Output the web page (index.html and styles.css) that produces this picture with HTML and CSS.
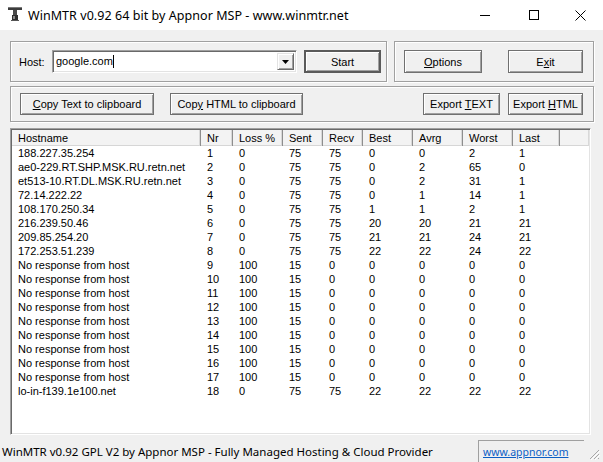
FILE: index.html
```html
<!DOCTYPE html>
<html>
<head>
<meta charset="utf-8">
<link rel="stylesheet" href="styles.css">
</head>
<body>
<div class="window">
  <div class="titlebar">
    <svg class="app-icon" width="16" height="16" viewBox="0 0 16 16">
      <rect x="1" y="1" width="14" height="3" fill="#3c3c3c"/>
      <rect x="1" y="1" width="14" height="1" fill="#7a7a7a"/>
      <rect x="6" y="4" width="4" height="6" fill="#4a4a4a"/>
      <rect x="5" y="9" width="6" height="5" fill="#2e2e2e"/>
      <rect x="6" y="10" width="2" height="3" fill="#8a8a8a"/>
      <rect x="4" y="14" width="8" height="1" fill="#555"/>
    </svg>
    <span class="title">WinMTR v0.92 64 bit by Appnor MSP - www.winmtr.net</span>
    <div class="controls">
      <span class="ctl"><svg width="10" height="10" viewBox="0 0 10 10"><rect x="0" y="5" width="10" height="1" fill="#000"/></svg></span>
      <span class="ctl"><svg width="10" height="10" viewBox="0 0 10 10"><rect x="0.5" y="0.5" width="9" height="9" fill="none" stroke="#000"/></svg></span>
      <span class="ctl"><svg width="11" height="11" viewBox="0 0 11 11"><path d="M0.5 0.5 L10.5 10.5 M10.5 0.5 L0.5 10.5" stroke="#000" stroke-width="1"/></svg></span>
    </div>
  </div>
  <div class="client">
    <div class="row1">
      <div class="group g-host">
        <span class="label">Host:</span>
        <div class="combo">
          <span class="combo-text">google.com<span class="caret"></span></span>
          <span class="combo-btn"><svg width="7" height="4" viewBox="0 0 7 4"><path d="M0 0 H7 L3.5 4 Z" fill="#000"/></svg></span>
        </div>
        <button class="btn btn-default btn-start">Start</button>
      </div>
      <div class="group g-opts">
        <button class="btn btn-options"><u>O</u>ptions</button>
        <button class="btn btn-exit">E<u>x</u>it</button>
      </div>
    </div>
    <div class="group row2">
      <button class="btn btn-copytext"><u>C</u>opy Text to clipboard</button>
      <button class="btn btn-copyhtml">Cop<u>y</u> HTML to clipboard</button>
      <span class="spacer"></span>
      <button class="btn btn-exptext">Export <u>T</u>EXT</button>
      <button class="btn btn-exphtml">Export <u>H</u>TML</button>
    </div>
    <div class="list">
      <div class="list-head">
        <span class="hc c-host">Hostname</span>
        <span class="hc c-nr">Nr</span>
        <span class="hc c-loss">Loss %</span>
        <span class="hc c-sent">Sent</span>
        <span class="hc c-recv">Recv</span>
        <span class="hc c-best">Best</span>
        <span class="hc c-avrg">Avrg</span>
        <span class="hc c-worst">Worst</span>
        <span class="hc c-last">Last</span>
        <span class="hc c-rest"></span>
      </div>
      <div class="list-body">
        <div class="row"><span class="c-host">188.227.35.254</span><span class="c-nr">1</span><span class="c-loss">0</span><span class="c-sent">75</span><span class="c-recv">75</span><span class="c-best">0</span><span class="c-avrg">0</span><span class="c-worst">2</span><span class="c-last">1</span></div>
        <div class="row"><span class="c-host">ae0-229.RT.SHP.MSK.RU.retn.net</span><span class="c-nr">2</span><span class="c-loss">0</span><span class="c-sent">75</span><span class="c-recv">75</span><span class="c-best">0</span><span class="c-avrg">2</span><span class="c-worst">65</span><span class="c-last">0</span></div>
        <div class="row"><span class="c-host">et513-10.RT.DL.MSK.RU.retn.net</span><span class="c-nr">3</span><span class="c-loss">0</span><span class="c-sent">75</span><span class="c-recv">75</span><span class="c-best">0</span><span class="c-avrg">2</span><span class="c-worst">31</span><span class="c-last">1</span></div>
        <div class="row"><span class="c-host">72.14.222.22</span><span class="c-nr">4</span><span class="c-loss">0</span><span class="c-sent">75</span><span class="c-recv">75</span><span class="c-best">0</span><span class="c-avrg">1</span><span class="c-worst">14</span><span class="c-last">1</span></div>
        <div class="row"><span class="c-host">108.170.250.34</span><span class="c-nr">5</span><span class="c-loss">0</span><span class="c-sent">75</span><span class="c-recv">75</span><span class="c-best">1</span><span class="c-avrg">1</span><span class="c-worst">2</span><span class="c-last">1</span></div>
        <div class="row"><span class="c-host">216.239.50.46</span><span class="c-nr">6</span><span class="c-loss">0</span><span class="c-sent">75</span><span class="c-recv">75</span><span class="c-best">20</span><span class="c-avrg">20</span><span class="c-worst">21</span><span class="c-last">21</span></div>
        <div class="row"><span class="c-host">209.85.254.20</span><span class="c-nr">7</span><span class="c-loss">0</span><span class="c-sent">75</span><span class="c-recv">75</span><span class="c-best">21</span><span class="c-avrg">21</span><span class="c-worst">24</span><span class="c-last">21</span></div>
        <div class="row"><span class="c-host">172.253.51.239</span><span class="c-nr">8</span><span class="c-loss">0</span><span class="c-sent">75</span><span class="c-recv">75</span><span class="c-best">22</span><span class="c-avrg">22</span><span class="c-worst">24</span><span class="c-last">22</span></div>
        <div class="row"><span class="c-host">No response from host</span><span class="c-nr">9</span><span class="c-loss">100</span><span class="c-sent">15</span><span class="c-recv">0</span><span class="c-best">0</span><span class="c-avrg">0</span><span class="c-worst">0</span><span class="c-last">0</span></div>
        <div class="row"><span class="c-host">No response from host</span><span class="c-nr">10</span><span class="c-loss">100</span><span class="c-sent">15</span><span class="c-recv">0</span><span class="c-best">0</span><span class="c-avrg">0</span><span class="c-worst">0</span><span class="c-last">0</span></div>
        <div class="row"><span class="c-host">No response from host</span><span class="c-nr">11</span><span class="c-loss">100</span><span class="c-sent">15</span><span class="c-recv">0</span><span class="c-best">0</span><span class="c-avrg">0</span><span class="c-worst">0</span><span class="c-last">0</span></div>
        <div class="row"><span class="c-host">No response from host</span><span class="c-nr">12</span><span class="c-loss">100</span><span class="c-sent">15</span><span class="c-recv">0</span><span class="c-best">0</span><span class="c-avrg">0</span><span class="c-worst">0</span><span class="c-last">0</span></div>
        <div class="row"><span class="c-host">No response from host</span><span class="c-nr">13</span><span class="c-loss">100</span><span class="c-sent">15</span><span class="c-recv">0</span><span class="c-best">0</span><span class="c-avrg">0</span><span class="c-worst">0</span><span class="c-last">0</span></div>
        <div class="row"><span class="c-host">No response from host</span><span class="c-nr">14</span><span class="c-loss">100</span><span class="c-sent">15</span><span class="c-recv">0</span><span class="c-best">0</span><span class="c-avrg">0</span><span class="c-worst">0</span><span class="c-last">0</span></div>
        <div class="row"><span class="c-host">No response from host</span><span class="c-nr">15</span><span class="c-loss">100</span><span class="c-sent">15</span><span class="c-recv">0</span><span class="c-best">0</span><span class="c-avrg">0</span><span class="c-worst">0</span><span class="c-last">0</span></div>
        <div class="row"><span class="c-host">No response from host</span><span class="c-nr">16</span><span class="c-loss">100</span><span class="c-sent">15</span><span class="c-recv">0</span><span class="c-best">0</span><span class="c-avrg">0</span><span class="c-worst">0</span><span class="c-last">0</span></div>
        <div class="row"><span class="c-host">No response from host</span><span class="c-nr">17</span><span class="c-loss">100</span><span class="c-sent">15</span><span class="c-recv">0</span><span class="c-best">0</span><span class="c-avrg">0</span><span class="c-worst">0</span><span class="c-last">0</span></div>
        <div class="row"><span class="c-host">lo-in-f139.1e100.net</span><span class="c-nr">18</span><span class="c-loss">0</span><span class="c-sent">75</span><span class="c-recv">75</span><span class="c-best">22</span><span class="c-avrg">22</span><span class="c-worst">22</span><span class="c-last">22</span></div>
      </div>
    </div>
  </div>
  <div class="statusbar">
    <span class="status-text">WinMTR v0.92 GPL V2 by Appnor MSP - Fully Managed Hosting &amp; Cloud Provider</span>
    <span class="status-link"><a class="link">www.appnor.com</a></span>
    <svg class="grip" width="12" height="12" viewBox="0 0 12 12">
      <path d="M11 2 L2 11 M11 6 L6 11 M11 10 L10 11" stroke="#a8a8a8" stroke-width="1"/>
      <path d="M12 3 L3 12 M12 7 L7 12" stroke="#ffffff" stroke-width="1"/>
    </svg>
  </div>
</div>
</body>
</html>
```

FILE: styles.css
```css
* { box-sizing: border-box; }
html, body { margin: 0; padding: 0; }
body {
  width: 603px;
  height: 462px;
  overflow: hidden;
  background: #f0f0f0;
  font-family: "Liberation Sans", Arial, sans-serif;
  font-size: 11px;
  color: #000;
}
.window {
  width: 603px;
  height: 462px;
  display: flex;
  flex-direction: column;
  position: relative;
}
.titlebar {
  height: 30px;
  background: #ffffff;
  display: flex;
  align-items: center;
  flex: none;
}
.app-icon { margin-left: 7px; margin-top: -2px; flex: none; }
.title {
  margin-left: 5px;
  font-family: "Noto Sans", "Open Sans", sans-serif;
  font-size: 12.5px;
  color: #000;
  letter-spacing: 0.05px;
}
.controls {
  margin-left: auto;
  display: flex;
  height: 30px;
}
.ctl {
  width: 46px;
  height: 30px;
  display: flex;
  align-items: center;
  justify-content: center;
}
.ctl:first-child { padding-right: 6px; }
.client {
  flex: 1;
  padding: 11px 0 0 10px;
  display: flex;
  flex-direction: column;
}
.group {
  border: 1px solid #a0a0a0;
  box-shadow: 1px 1px 0 #ffffff, inset 1px 1px 0 #ffffff;
}
.row1 { display: flex; height: 41px; flex: none; }
.g-host {
  width: 377px;
  height: 41px;
  display: flex;
  align-items: center;
  padding-left: 8px;
}
.label { width: 33px; flex: none; }
.combo {
  width: 245px;
  height: 23px;
  background: #fff;
  display: flex;
  border-top: 1px solid #a0a0a0;
  border-left: 1px solid #a0a0a0;
  border-right: 1px solid #fff;
  border-bottom: 1px solid #fff;
  box-shadow: inset 1px 1px 0 #696969, inset -1px -1px 0 #e3e3e3;
  padding: 2px;
}
.combo-text {
  flex: 1;
  padding-left: 1px;
  line-height: 17px;
  display: flex;
  align-items: center;
}
.caret {
  display: inline-block;
  width: 1px;
  height: 13px;
  background: #000;
}
.combo-btn {
  width: 17px;
  height: 17px;
  background: #f0f0f0;
  border-top: 1px solid #e3e3e3;
  border-left: 1px solid #e3e3e3;
  border-right: 1px solid #696969;
  border-bottom: 1px solid #696969;
  box-shadow: inset 1px 1px 0 #fff, inset -1px -1px 0 #a0a0a0;
  display: flex;
  align-items: center;
  justify-content: center;
}
.btn {
  font-family: "Liberation Sans", Arial, sans-serif;
  font-size: 11px;
  color: #000;
  background: #f0f0f0;
  border: 1px solid #707070;
  box-shadow: inset 1px 1px 0 #ffffff, inset -1px -1px 0 #a0a0a0;
  padding: 0;
  margin: 0;
  height: 23px;
  flex: none;
}
.btn-default {
  border: 2px solid #5a5a5a;
}
.btn-start { width: 77px; margin-left: 7px; }
.g-opts {
  width: 200px;
  height: 41px;
  margin-left: 7px;
  display: flex;
  align-items: center;
  padding-left: 9px;
}
.btn-options { width: 78px; }
.btn-exit { width: 75px; margin-left: 26px; }
.row2 {
  margin-top: 4px;
  width: 584px;
  height: 36px;
  flex: none;
  display: flex;
  align-items: center;
  padding-left: 9px;
}
.row2 .btn { height: 22px; }
.btn-copytext { width: 134px; }
.btn-copyhtml { width: 133px; margin-left: 16px; }
.spacer { flex: 1; }
.btn-exptext { width: 77px; }
.btn-exphtml { width: 75px; margin-left: 8px; margin-right: 10px; }
.list {
  margin-top: 6px;
  width: 581px;
  height: 307px;
  background: #fff;
  border-top: 1px solid #a0a0a0;
  border-left: 1px solid #a0a0a0;
  border-right: 1px solid #fff;
  border-bottom: 1px solid #fff;
  box-shadow: inset 1px 1px 0 #696969, inset -1px -1px 0 #e3e3e3;
  padding: 1px;
  flex: none;
  display: flex;
  flex-direction: column;
}
.list-head {
  display: flex;
  height: 16px;
  background: #f3f3f3;
  flex: none;
}
.hc {
  height: 16px;
  line-height: 17px;
  border-right: 1px solid #8e8e8e;
  box-shadow: inset -1px 0 0 #d8d8d8, inset 0 -1px 0 #d6d6d6;
  padding-left: 6px;
  white-space: nowrap;
}
.hc.c-rest { flex: 1; border-right: none; }
.list-body { display: flex; flex-direction: column; }
.row { display: flex; height: 14px; line-height: 15px; }
.row span { padding-left: 6px; white-space: nowrap; }
.c-host { width: 189px; flex: none; }
.c-nr { width: 32px; flex: none; }
.c-loss { width: 50px; flex: none; }
.c-sent { width: 40px; flex: none; }
.c-recv { width: 40px; flex: none; }
.c-best { width: 50px; flex: none; }
.c-avrg { width: 50px; flex: none; }
.c-worst { width: 50px; flex: none; }
.c-last { width: 47px; flex: none; }
.statusbar {
  height: 25px;
  flex: none;
  display: flex;
  align-items: flex-end;
  font-family: "Noto Sans", "Open Sans", sans-serif;
  font-size: 11.5px;
}
.status-text {
  width: 478px;
  padding-left: 2px;
  height: 22px;
  line-height: 24px;
  white-space: nowrap;
  overflow: hidden;
}
.status-link {
  width: 106px;
  height: 22px;
  border-top: 1px solid #a0a0a0;
  border-left: 1px solid #a0a0a0;
  padding-left: 4px;
  line-height: 22px;
  font-size: 10.5px;
}
.link { color: #0b5fc6; text-decoration: underline; }
.grip { position: absolute; right: 3px; bottom: 2px; }
```
